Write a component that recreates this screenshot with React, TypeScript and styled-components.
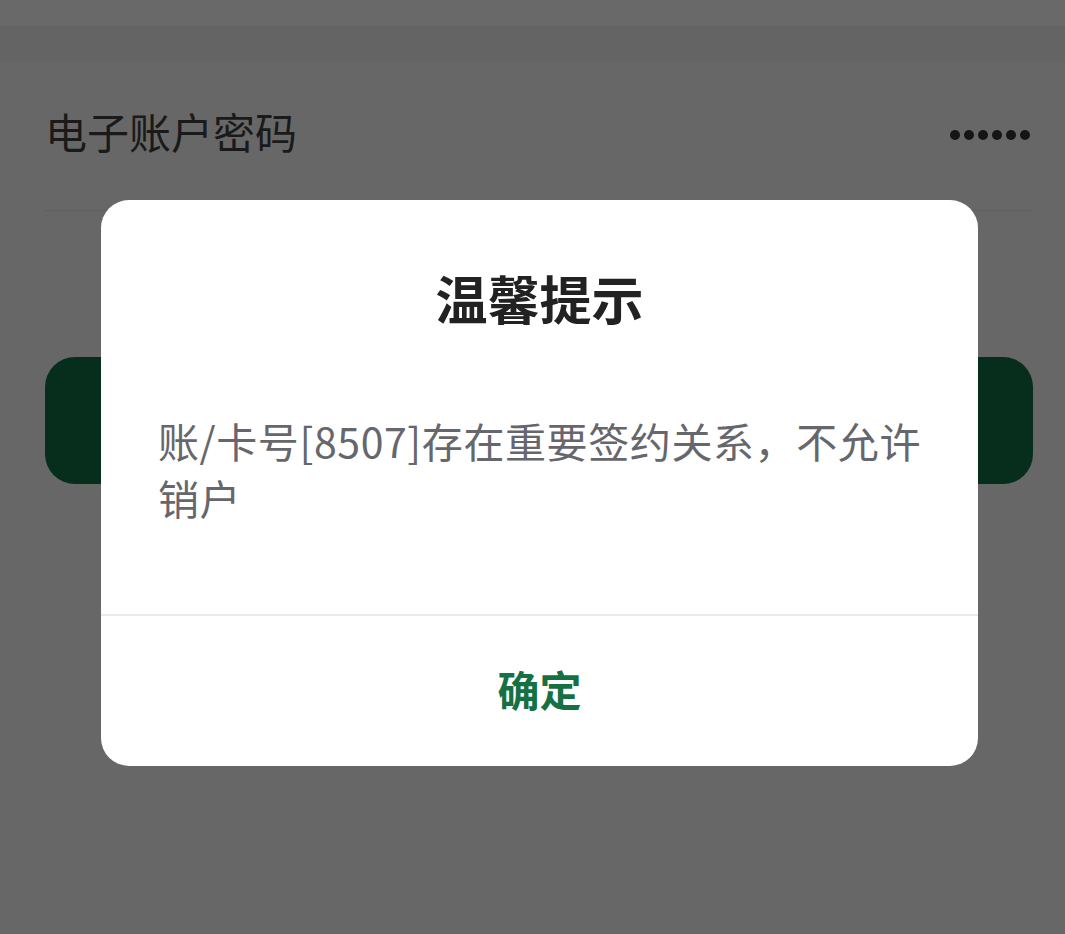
import styled, { createGlobalStyle } from "styled-components";

const Global = createGlobalStyle`
  html, body { margin: 0; padding: 0; }
  body {
    background: #676767;
    font-family: "Noto Sans CJK SC", "Noto Sans", sans-serif;
  }
`;

export default function App() {
  return (
    <>
      <Global />
      <St.Page>
        <St.StatusBar />
        <St.NavBar />
        <St.Body>
          <St.Row>
            <St.Label>电子账户密码</St.Label>
            <St.Dots>
              {Array.from({ length: 6 }).map((_, i) => (
                <St.Dot key={i} />
              ))}
            </St.Dots>
          </St.Row>
          <St.SubmitButton />
        </St.Body>
        <St.Dialog>
          <St.Title>温馨提示</St.Title>
          <St.Message>账/卡号[8507]存在重要签约关系，不允许销户</St.Message>
          <St.Footer>
            <St.Confirm>确定</St.Confirm>
          </St.Footer>
        </St.Dialog>
      </St.Page>
    </>
  );
}

const St = {
  Page: styled.div`
    position: relative;
    width: 1065px;
    height: 934px;
    overflow: hidden;
    background: #676767;
  `,
  StatusBar: styled.div`
    height: 26px;
    background: #696969;
  `,
  NavBar: styled.div`
    height: 36px;
    background: #646464;
  `,
  Body: styled.div`
    padding: 0 32px 0 45px;
  `,
  Row: styled.div`
    display: flex;
    align-items: center;
    justify-content: space-between;
    height: 136px;
    padding-bottom: 12px;
    border-bottom: 1px solid #5f5f5f;
  `,
  Label: styled.span`
    font-size: 42px;
    color: #1a1a1a;
  `,
  Dots: styled.div`
    display: flex;
    gap: 4px;
    padding-right: 3px;
    padding-top: 10px;
  `,
  Dot: styled.span`
    width: 10px;
    height: 10px;
    border-radius: 50%;
    background: #151515;
  `,
  SubmitButton: styled.div`
    margin-top: 146px;
    height: 127px;
    border-radius: 30px;
    background: #072e1c;
  `,
  Dialog: styled.div`
    position: absolute;
    left: 101px;
    top: 200px;
    width: 877px;
    height: 566px;
    background: #ffffff;
    border-radius: 28px;
    display: flex;
    flex-direction: column;
  `,
  Title: styled.h2`
    margin: 0;
    padding-top: 63px;
    text-align: center;
    font-size: 52px;
    font-weight: 700;
    line-height: 70px;
    color: #222222;
  `,
  Message: styled.p`
    margin: 0;
    padding: 79px 57px 0 57px;
    font-size: 41px;
    line-height: 57px;
    letter-spacing: 0.6px;
    color: #66666d;
    flex: 1;
  `,
  Footer: styled.div`
    height: 152px;
    border-top: 2px solid #ebebeb;
    display: flex;
    align-items: center;
    justify-content: center;
    padding-bottom: 6px;
    box-sizing: border-box;
  `,
  Confirm: styled.button`
    border: none;
    background: none;
    padding: 0;
    font-family: inherit;
    font-size: 42px;
    font-weight: 700;
    color: #157142;
    cursor: pointer;
  `,
};
